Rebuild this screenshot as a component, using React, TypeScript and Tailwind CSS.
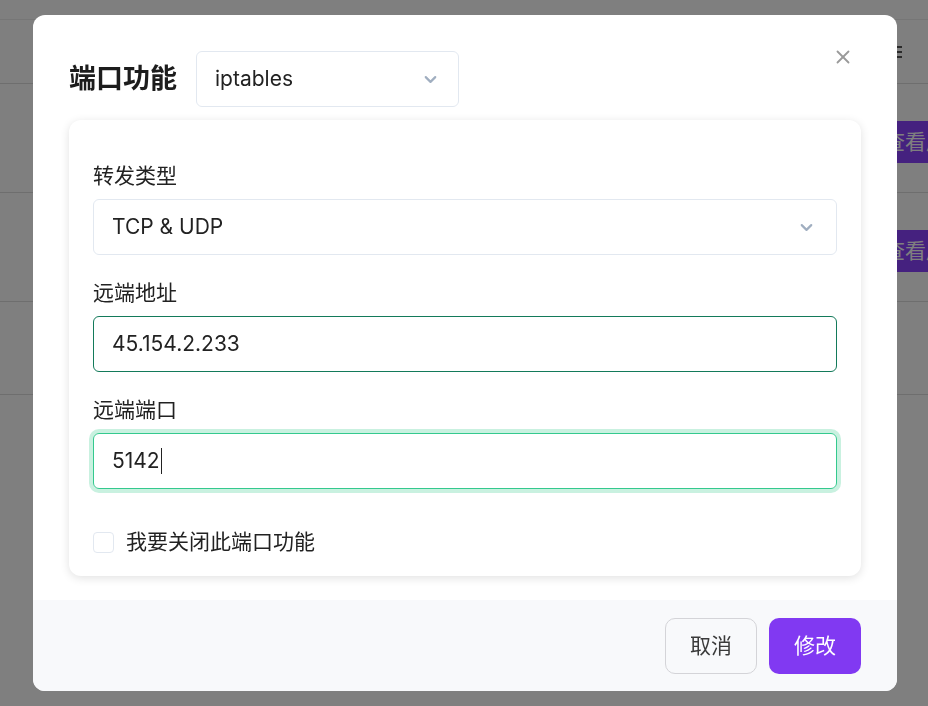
import { ChevronDown, X } from 'lucide-react';

const font = { fontFamily: 'Inter, "Noto Sans CJK SC", sans-serif' };

function BackgroundPage() {
  const rows = [0, 1];
  return (
    <div className="h-screen bg-white overflow-hidden">
      <div className="h-[20px] border-b border-[#ececec]" />
      <div className="h-[64px] border-b border-[#dcdcdc] flex items-center justify-end pr-[26px]">
        <div className="flex flex-col gap-[3px]">
          <span className="block w-[8px] h-[2px] bg-[#555]" />
          <span className="block w-[8px] h-[2px] bg-[#555]" />
          <span className="block w-[8px] h-[2px] bg-[#555]" />
        </div>
      </div>
      {rows.map((r) => (
        <div key={r} className="h-[109px] border-b border-[#dcdcdc] flex items-center justify-end pt-[7px]">
          <button className="h-[42px] pl-[16px] pr-4 mr-[-56px] bg-[#8b42fe] text-white text-[21px] rounded-md whitespace-nowrap" style={font}>
            查看后台
          </button>
        </div>
      ))}
      <div className="h-[93px] border-b border-[#dcdcdc]" />
    </div>
  );
}

function Field({ label, children }: { label: string; children: React.ReactNode }) {
  return (
    <div className="mt-6 first:mt-0">
      <div className="text-[21px] leading-[28px] text-[#222] mb-[9px]">{label}</div>
      {children}
    </div>
  );
}

export default function App() {
  return (
    <div className="relative" style={font}>
      <BackgroundPage />
      <div className="fixed inset-0 bg-black/50 flex items-center justify-center pl-[2px]">
        <div className="relative w-[864px] h-[676px] bg-white rounded-xl flex flex-col overflow-hidden">
          <button className="absolute right-[42px] top-[30px] w-6 h-6 flex items-center justify-center text-[#9a9a9a]">
            <X className="w-[22px] h-[22px]" strokeWidth={2} />
          </button>

          <div className="flex items-center px-9 pt-9">
            <h2 className="text-[27px] font-bold text-[#1c1c1c] mr-[19px]">端口功能</h2>
            <div className="w-[263px] h-[56px] border border-[#e2e8f0] rounded-md flex items-center justify-between pl-[18px] pr-[18px]">
              <span className="text-[21px] text-[#222]">iptables</span>
              <ChevronDown className="w-[19px] h-[19px] text-[#a0aec0]" strokeWidth={2.75} />
            </div>
          </div>

          <div className="mx-9 mt-[13px] bg-white rounded-xl shadow-[0_2px_10px_rgba(0,0,0,0.12)] px-6 pt-[42px] pb-5">
            <Field label="转发类型">
              <div className="h-[56px] border border-[#e2e8f0] rounded-md flex items-center justify-between pl-[18px] pr-[20px]">
                <span className="text-[21px] text-[#222]">TCP &amp; UDP</span>
                <ChevronDown className="w-[19px] h-[19px] text-[#a0aec0]" strokeWidth={2.75} />
              </div>
            </Field>
            <Field label="远端地址">
              <div className="h-[56px] border border-[#137a5a] rounded-md flex items-center pl-[18px]">
                <span className="text-[21px] text-[#222]">45.154.2.233</span>
              </div>
            </Field>
            <Field label="远端端口">
              <div className="h-[56px] border border-[#34c98e] rounded-md flex items-center pl-[18px] ring-4 ring-[#c9f1e0]">
                <span className="text-[21px] text-[#222]">5142</span>
                <span className="w-px h-[26px] bg-[#222] ml-[1px]" />
              </div>
            </Field>
            <div className="mt-[39px] flex items-center gap-3 h-[28px]">
              <span className="w-[21px] h-[21px] border border-[#e2e8f0] rounded" />
              <span className="text-[21px] text-[#222]">我要关闭此端口功能</span>
            </div>
          </div>

          <div className="mt-6 flex-1 bg-[#f8f9fb] flex justify-end items-start gap-3 px-9 pt-[18px]">
            <button className="w-[92px] h-[56px] rounded-[10px] border border-[#d4d4d8] bg-[#f8f9fb] text-[21px] text-[#3a3a3a]">
              取消
            </button>
            <button className="w-[92px] h-[56px] rounded-[10px] bg-[#8139f2] text-[21px] text-white">
              修改
            </button>
          </div>
        </div>
      </div>
    </div>
  );
}
